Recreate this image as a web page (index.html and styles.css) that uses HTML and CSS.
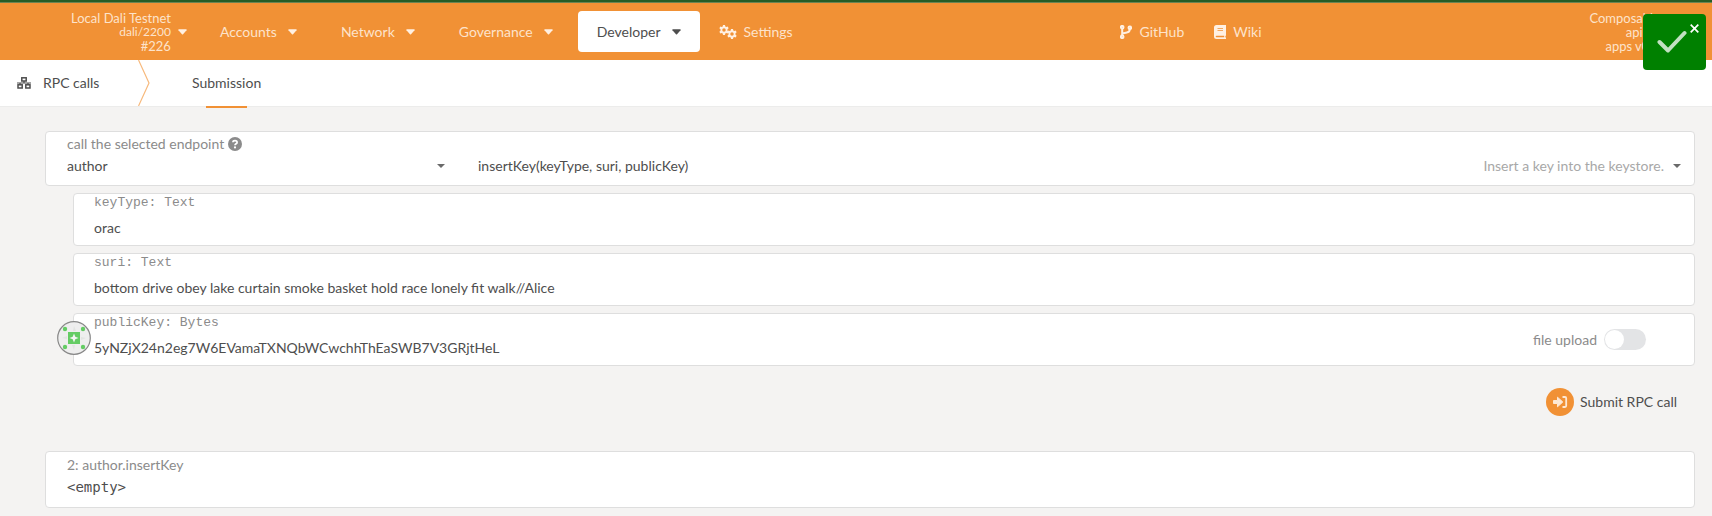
FILE: index.html
```html
<!DOCTYPE html>
<html lang="en">
<head>
<meta charset="utf-8">
<title>RPC calls</title>
<link rel="stylesheet" href="styles.css">
</head>
<body>
<svg class="defs" aria-hidden="true">
  <symbol id="caret" viewBox="0 0 10 6"><path d="M1 0h8q1 .3.5 1L5.6 5.6q-.6.5-1.2 0L.5 1Q0 .3 1 0z" fill="currentColor"/></symbol>
  <symbol id="caret-small" viewBox="0 0 8 4"><path d="M0 0h8L4 4z" fill="currentColor"/></symbol>
  <symbol id="gear" viewBox="0 0 20 20"><path fill="currentColor" fill-rule="evenodd" d="M8 0h4l.6 3 1.8 1 2.9-1 2 3.5L17 8.500v3l2.300 2-2 3.500-2.900-1-1.800 1L12 20H8l-.6-3-1.800-1-2.900 1-2-3.500L3 11.500v-3L.7 6.500 2.700 3l2.900 1 1.800-1zM10 6.500a3.500 3.500 0 1 0 0 7 3.500 3.500 0 0 0 0-7z"/></symbol>
</svg>

<header class="topbar">
  <div class="menu">
    <button class="chain" type="button">
      <span class="chain-text"><span>Local Dali Testnet</span><small>dali/2200</small><span>#226</span></span>
      <svg class="caret"><use href="#caret"/></svg>
    </button>
    <nav class="nav">
      <button class="nav-item" type="button">Accounts <svg class="caret"><use href="#caret"/></svg></button>
      <button class="nav-item" type="button">Network <svg class="caret"><use href="#caret"/></svg></button>
      <button class="nav-item" type="button">Governance <svg class="caret"><use href="#caret"/></svg></button>
      <button class="nav-item active" type="button">Developer <svg class="caret"><use href="#caret"/></svg></button>
      <a class="nav-link" href="#settings"><svg class="gears" viewBox="0 0 18 14"><use href="#gear" x="0" y="0" width="10" height="10"/><use href="#gear" x="8" y="4" width="10" height="10"/></svg>Settings</a>
    </nav>
  </div>
  <nav class="links">
    <a class="nav-link" href="#github"><svg class="branch" viewBox="0 0 12 14" fill="none" stroke="currentColor" stroke-width="2"><circle cx="2.200" cy="2.200" r="1.300"/><circle cx="2.200" cy="11.800" r="1.300"/><circle cx="9.800" cy="2.800" r="1.300"/><path d="M2.200 3.500v7M9.800 4q0 3.300-3 3.500L2.500 8.500"/></svg>GitHub</a>
    <a class="nav-link" href="#wiki"><svg class="book" viewBox="0 0 12 14"><path fill="currentColor" fill-rule="evenodd" d="M2.500 0H12v10.500l-.6.500v1.300l.6.400V14H2.500A2.500 2.500 0 0 1 0 11.500v-9A2.500 2.500 0 0 1 2.500 0zM3.500 3.300v.8h5.500v-.8zM3.500 5.200v.8h5.500v-.8zM2.500 10.700a.8.8 0 0 0 0 1.600h7.700v-1.600z"/></svg>Wiki</a>
  </nav>
  <div class="version"><span>Composable</span><span>api v7</span><span>apps v0.1</span></div>
</header>

<nav class="tabs">
  <div class="tabs-title">
    <svg class="rpc" viewBox="0 0 14 12" fill="none" stroke="currentColor" stroke-width="1.500"><rect x="4.800" y=".8" width="4.400" height="3.200"/><rect x="1" y="7.800" width="4.200" height="3.200"/><rect x="8.800" y="7.800" width="4.200" height="3.200"/><path d="M0 6h14M7 4v2M3 6v2M11 6v2" stroke-width="1.200"/></svg>
    RPC calls
  </div>
  <svg class="chevron" viewBox="0 0 12 46" preserveAspectRatio="none"><path d="M.5 0 11 23 .5 46" fill="none" stroke="#f7b97c" stroke-width="1.200"/></svg>
  <a class="tab" href="#submission">Submission</a>
</nav>

<main class="content">
  <section class="card endpoint">
    <div class="card-label"><label for="section">call the selected endpoint</label>
      <svg class="help" viewBox="0 0 14 14"><circle cx="7" cy="7" r="7" fill="currentColor"/><path d="M4.900 5.300C5 3.100 9.100 3.100 9.100 5.400 9.100 6.900 7 6.700 7 8.300" fill="none" stroke="#fff" stroke-width="1.700"/><circle cx="7" cy="10.400" r="1.100" fill="#fff"/></svg>
    </div>
    <div class="selects">
      <div class="picker">
        <select id="section"><option>author</option></select>
        <svg class="caret-small"><use href="#caret-small"/></svg>
      </div>
      <div class="picker">
        <select aria-label="method"><option>insertKey(keyType, suri, publicKey)</option></select>
        <span class="hint">Insert a key into the keystore.</span>
        <svg class="caret-small"><use href="#caret-small"/></svg>
      </div>
    </div>
  </section>

  <div class="params">
    <div class="card param">
      <div class="field"><label for="p1">keyType: Text</label><input id="p1" type="text" value="orac"></div>
    </div>
    <div class="card param">
      <div class="field"><label for="p2">suri: Text</label><input id="p2" type="text" value="bottom drive obey lake curtain smoke basket hold race lonely fit walk//Alice"></div>
    </div>
    <div class="card param">
      <svg class="identicon" viewBox="0 0 34 34"><circle cx="17" cy="17" r="16.300" fill="#eee" stroke="#888" stroke-width="1.200"/><path d="M17 5l2 5h-3zM17 29l-2-5h3zM5 17l5-2v3zM29 17l-5 2v-3z" fill="#e2e4e2"/><rect x="11" y="11" width="12" height="12" fill="#64cc64"/><path d="M17 12.500l1.300 3.200 3.200 1.300-3.200 1.300L17 21.500l-1.300-3.200-3.200-1.300 3.200-1.300z" fill="#f4f4f4"/><g fill="#64cc64"><circle cx="8" cy="8" r="2.200"/><circle cx="26" cy="8" r="2.200"/><circle cx="8" cy="26" r="2.200"/><circle cx="26" cy="26" r="2.200"/></g></svg>
      <div class="field"><label for="p3">publicKey: Bytes</label><input id="p3" type="text" value="5yNZjX24n2eg7W6EVamaTXNQbWCwchhThEaSWB7V3GRjtHeL"></div>
      <label class="upload">file upload <input class="switch" type="checkbox"></label>
    </div>
  </div>

  <div class="actions">
    <button class="submit" type="button">
      <svg class="submit-icon" viewBox="0 0 28 28"><circle cx="14" cy="14" r="14" fill="#f19135"/><path d="M7.500 12.500h4V9.200l5.300 4.800-5.300 4.800v-3.300h-4z" fill="#fde9d6" stroke="#fde9d6" stroke-linejoin="round"/><path d="M16.500 9H19q1.200 0 1.200 1.200v7.600q0 1.200-1.200 1.200h-2.500" fill="none" stroke="#fde9d6" stroke-width="1.800"/></svg>
      Submit RPC call
    </button>
  </div>

  <section class="card result">
    <div class="card-label">2: author.insertKey</div>
    <output class="result-value">&lt;empty&gt;</output>
  </section>
</main>

<aside class="toast" role="status">
  <svg class="check" viewBox="0 0 30 23"><path d="M2.500 12l8.500 8.500L27.500 3" fill="none" stroke="#c2e0c2" stroke-width="4" stroke-linecap="round" stroke-linejoin="round"/></svg>
  <button class="close" type="button" aria-label="Close"><svg class="close-icon" viewBox="0 0 9 9"><path d="M.7.7l7.600 7.600M8.300.7L.7 8.300" stroke="#fff" stroke-width="1.700"/></svg></button>
</aside>
</body>
</html>
```
FILE: styles.css
```css
* { box-sizing: border-box; }

body {
  margin: 0;
  min-height: 100vh;
  background: #f4f3f2;
  color: #4e4e4e;
  font: 14px/20px Lato, "Noto Sans", sans-serif;
}

button, input, select { font: inherit; color: inherit; background: none; border: 0; padding: 0; margin: 0; }
button { cursor: pointer; }
a { color: inherit; text-decoration: none; }
svg { display: block; flex: none; }
.defs { position: absolute; width: 0; height: 0; }

.topbar {
  display: flex;
  align-items: center;
  justify-content: space-between;
  height: 60px;
  padding: 1px 52px 0 71px;
  border-top: 2px solid #265c26;
  box-shadow: inset 0 1px #6b8452;
  background: #f19135;
  color: #fde3cb;
}
.menu { display: flex; align-items: center; }
.chain { display: flex; align-items: center; gap: 7px; margin-right: 14px; }
.chain-text { display: flex; flex-direction: column; text-align: right; font-size: 13px; line-height: 14px; }
.chain-text small { font-size: 12px; line-height: 14px; }
.caret { width: 9px; height: 6px; color: #fff0e2; }
.nav { display: flex; align-items: center; }
.nav-item { display: flex; align-items: center; gap: 11px; height: 41px; padding: 0 19px; border-radius: 4px; }
.nav-item + .nav-item { margin-left: 6px; }
.nav-item.active { background: #fff; color: #4e4e4e; }
.active .caret { color: #4e4e4e; }
.nav-link { display: flex; align-items: center; gap: 7px; }
.nav .nav-link { margin-left: 19px; }
.nav-link svg { color: #fff0e2; }
.gears { width: 18px; height: 14px; }
.branch, .book { width: 12px; height: 14px; }
.links { display: flex; gap: 30px; }
.version { display: flex; flex-direction: column; text-align: right; font-size: 13px; line-height: 14px; }

.tabs { display: flex; height: 47px; background: #fff; border-bottom: 1px solid #ececeb; }
.tabs-title { display: flex; align-items: center; gap: 12px; width: 138px; padding-left: 17px; }
.rpc { width: 14px; height: 12px; }
.chevron { width: 12px; height: 46px; }
.tab { position: relative; display: flex; align-items: center; height: 46px; margin-left: 42px; }
.tab::after { content: ""; position: absolute; left: 20%; right: 20%; bottom: -2px; height: 2px; background: #f19135; }

.content { padding: 24px 17px 8px 45px; }
.card { background: #fff; border: 1px solid #dedede; border-radius: 4px; }
.card-label { display: flex; align-items: center; gap: 4px; color: #8b8b8b; }
.endpoint { height: 55px; padding: 2px 13px 0 21px; }
.help { width: 14px; height: 14px; }
.selects { display: grid; grid-template-columns: 378fr 1203fr; gap: 33px; }
.picker { position: relative; display: flex; align-items: center; height: 24px; }
.picker select { flex: 1; min-width: 0; appearance: none; outline: none; }
.hint { margin-right: 9px; color: #a8a8a8; }
.caret-small { width: 8px; height: 4px; color: #6a6a6a; }

.params { display: flex; flex-direction: column; gap: 7px; margin: 7px 0 0 28px; }
.param { position: relative; display: flex; align-items: center; height: 53px; padding: 0 48px 0 20px; }
.field { flex: 1; display: flex; flex-direction: column; }
.field label { color: #8b8b8b; font: 13px/16px "Liberation Mono", monospace; }
.field input { height: 34px; outline: none; }
.identicon { position: absolute; left: -17px; top: 7px; width: 34px; height: 34px; }
.upload { display: flex; align-items: center; gap: 7px; color: #8b8b8b; }
.switch { appearance: none; display: flex; width: 42px; height: 21px; padding: 1px; border-radius: 11px; background: #e3e4e6; }
.switch::before { content: ""; width: 19px; height: 19px; border-radius: 50%; background: #fff; }

.actions { display: flex; justify-content: flex-end; padding: 22px 18px 35px 0; }
.submit { display: flex; align-items: center; gap: 6px; }
.submit-icon { width: 28px; height: 28px; }

.result { height: 57px; padding: 3px 21px; }
.result-value { display: block; font: 14px/24px "DejaVu Sans Mono", monospace; }

.toast {
  position: absolute;
  top: 14px;
  right: 6px;
  width: 63px;
  height: 56px;
  padding: 16px 0 0 14px;
  border-radius: 4px;
  background: #008000;
}
.check { width: 30px; height: 23px; }
.close { position: absolute; top: 10px; right: 7px; }
.close-icon { width: 9px; height: 9px; }
```
